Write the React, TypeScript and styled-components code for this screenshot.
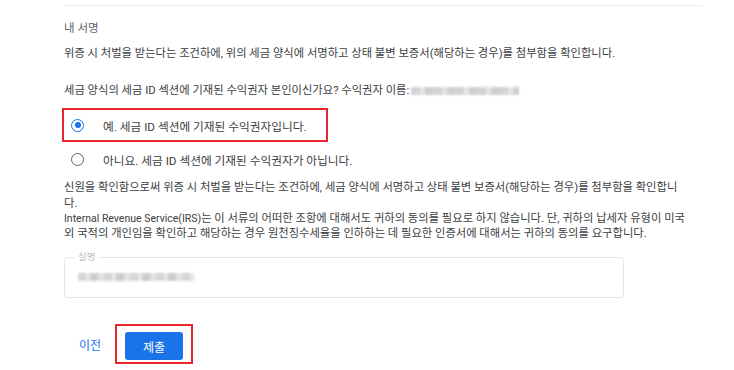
import React from "react";
import styled, { createGlobalStyle } from "styled-components";

const Global = createGlobalStyle`
  html, body { margin: 0; padding: 0; background: #fff; }
  body { font-family: Roboto, "Noto Sans CJK KR", sans-serif; color: #3c4043; }
  * { box-sizing: border-box; }
`;

const Page = styled.div`
  width: 734px;
  height: 370px;
  padding: 5px 32px 0 64px;
  overflow: hidden;
`;

const Divider = styled.div`
  height: 1px;
  background: #ebebeb;
`;

const Title = styled.div`
  font-size: 11.5px;
  line-height: 16px;
  color: #5f6368;
  margin-top: 14px;
`;

const Para = styled.p<{ $top: number }>`
  margin: ${(p) => p.$top}px 0 0;
  max-width: 626px;
  font-size: 11.3px;
  line-height: 15.2px;
  color: #3c4043;
`;

const Latin = styled.span`
  font-size: 10.5px;
`;

const Blur = styled.span<{ $w: number }>`
  display: inline-block;
  vertical-align: middle;
  width: ${(p) => p.$w}px;
  height: 8px;
  margin-left: 2px;
  background: repeating-linear-gradient(90deg, #d4d4d4 0 9px, #e4e4e4 9px 14px, #cfcfcf 14px 22px);
  filter: blur(1.2px);
`;

const Options = styled.div`
  margin-top: 10px;
  display: flex;
  flex-direction: column;
  gap: 2px;
`;

const Highlight = styled.div<{ $w: number }>`
  width: ${(p) => p.$w}px;
  border: 2px solid #e8262b;
  margin-left: -2px;
`;

const Option = styled.label`
  display: flex;
  align-items: center;
  height: 30px;
  padding-left: 7px;
  gap: 19px;
  font-size: 11.7px;
  color: #3c4043;
`;

const Radio = styled.span<{ $on?: boolean }>`
  width: 13px;
  height: 13px;
  border-radius: 50%;
  border: 1.6px solid ${(p) => (p.$on ? "#1a73e8" : "#5f6368")};
  display: flex;
  align-items: center;
  justify-content: center;
  flex-shrink: 0;
  &::after {
    content: "";
    width: 6px;
    height: 6px;
    border-radius: 50%;
    background: ${(p) => (p.$on ? "#1a73e8" : "transparent")};
  }
`;

const Field = styled.fieldset`
  margin: 11px 0 0;
  width: 560px;
  height: 46px;
  border: 1px solid #e6e6e6;
  border-radius: 4px;
  padding: 0 13px;
  display: flex;
  align-items: center;
`;

const Legend = styled.legend`
  font-size: 9.5px;
  color: #bdbdbd;
  padding: 0 3px;
  margin-left: -3px;
  line-height: 10px;
`;

const FieldBlur = styled.span`
  display: block;
  width: 116px;
  height: 8px;
  margin-top: -6px;
  background: repeating-linear-gradient(90deg, #d6d6d6 0 8px, #e6e6e6 8px 12px, #cdcdcd 12px 20px, #e2e2e2 20px 26px);
  filter: blur(1.2px);
`;

const Actions = styled.div`
  margin-top: 26px;
  display: flex;
  align-items: center;
  gap: 14px;
  padding-left: 15px;
`;

const TextButton = styled.button`
  border: none;
  background: none;
  padding: 0;
  font-family: inherit;
  font-size: 12px;
  color: #1a73e8;
`;

const SubmitWrap = styled.div`
  border: 2px solid #e8262b;
  padding: 6px 8px 2px 8px;
`;

const Primary = styled.button`
  width: 58px;
  height: 28px;
  border: none;
  border-radius: 3px;
  background: #1a73e8;
  color: #fff;
  font-family: inherit;
  font-size: 12px;
  display: flex;
  align-items: center;
  justify-content: center;
`;

export default function App() {
  return (
    <>
      <Global />
      <Page>
        <Divider />
        <Title>내 서명</Title>
        <Para $top={10}>
          위증 시 처벌을 받는다는 조건하에, 위의 세금 양식에 서명하고 상태 불변 보증서(해당하는 경우)를 첨부함을 확인합니다.
        </Para>
        <Para $top={22}>
          세금 양식의 세금 ID 섹션에 기재된 수익권자 본인이신가요? 수익권자 이름:
          <Blur $w={108} />
        </Para>
        <Options>
          <Highlight $w={266}>
            <Option>
              <Radio $on />
              예. 세금 ID 섹션에 기재된 수익권자입니다.
            </Option>
          </Highlight>
          <Option>
            <Radio />
            아니요. 세금 ID 섹션에 기재된 수익권자가 아닙니다.
          </Option>
        </Options>
        <Para $top={6}>
          신원을 확인함으로써 위증 시 처벌을 받는다는 조건하에, 세금 양식에 서명하고 상태 불변 보증서(해당하는 경우)를 첨부함을 확인합니다.
          <br />
          <Latin>Internal Revenue Service(IRS)</Latin>는 이 서류의 어떠한 조항에 대해서도 귀하의 동의를 필요로 하지 않습니다. 단, 귀하의 납세자 유형이 미국 외 국적의 개인임을 확인하고 해당하는 경우 원천징수세율을 인하하는 데 필요한 인증서에 대해서는 귀하의 동의를 요구합니다.
        </Para>
        <Field>
          <Legend>실명</Legend>
          <FieldBlur />
        </Field>
        <Actions>
          <TextButton>이전</TextButton>
          <SubmitWrap>
            <Primary>제출</Primary>
          </SubmitWrap>
        </Actions>
      </Page>
    </>
  );
}
